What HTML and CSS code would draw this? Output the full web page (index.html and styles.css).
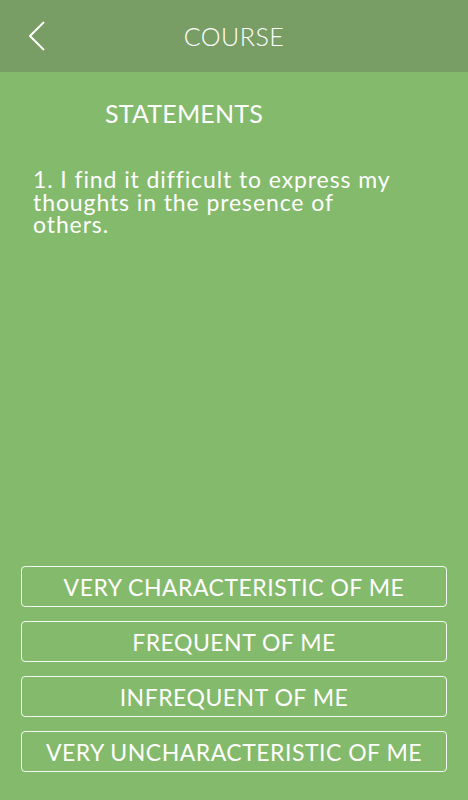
FILE: index.html
```html
<!DOCTYPE html>
<html lang="en">
<head>
    <meta charset="UTF-8">
    <meta name="viewport" content="width=device-width, initial-scale=1.0">
    <title>Course</title>
    <link rel="stylesheet" href="styles.css">
</head>
<body>
    <div class="topbar">
        <svg class="back" width="16" height="30" viewBox="0 0 16 30">
            <path d="M15 1 L1 15 L15 29" fill="none" stroke="#fff" stroke-width="2"/>
        </svg>
        <h1 class="title">COURSE</h1>
    </div>
    <div class="content">
        <h2 class="heading">STATEMENTS</h2>
        <p class="statement">1. I find it difficult to express my thoughts in the presence of others.</p>
        <div class="answers">
            <button class="answer">VERY CHARACTERISTIC OF ME</button>
            <button class="answer">FREQUENT OF ME</button>
            <button class="answer">INFREQUENT OF ME</button>
            <button class="answer">VERY UNCHARACTERISTIC OF ME</button>
        </div>
    </div>
</body>
</html>
```

FILE: styles.css
```css
html, body {
    margin: 0;
    height: 100%;
}
body {
    background-color: #84ba6c;
    color: white;
    font-family: "Lato", "Open Sans", sans-serif;
    display: flex;
    flex-direction: column;
}
.topbar {
    background-color: #789e66;
    height: 72px;
    display: flex;
    align-items: center;
    justify-content: center;
    position: relative;
}
.back {
    position: absolute;
    left: 29px;
    top: 21px;
}
.title {
    margin: 0;
    font-size: 25px;
    font-weight: 300;
    letter-spacing: 0.5px;
}
.content {
    flex: 1;
    display: flex;
    flex-direction: column;
    padding: 0 21px 28px;
}
.heading {
    margin: 26px 0 0 84px;
    font-size: 25px;
    font-weight: 400;
    letter-spacing: 0.2px;
}
.statement {
    margin: 40px 0 0 12px;
    width: 370px;
    font-size: 23px;
    font-weight: 400;
    line-height: 22.5px;
    letter-spacing: 0.9px;
}
.answers {
    margin-top: auto;
    display: flex;
    flex-direction: column;
    gap: 14px;
}
.answer {
    height: 41px;
    background: transparent;
    border: 1px solid rgba(255, 255, 255, 0.9);
    border-radius: 4px;
    color: white;
    font-family: "Lato", "Open Sans", sans-serif;
    font-size: 23px;
    font-weight: 400;
    letter-spacing: 0.5px;
    padding: 0;
}
```
